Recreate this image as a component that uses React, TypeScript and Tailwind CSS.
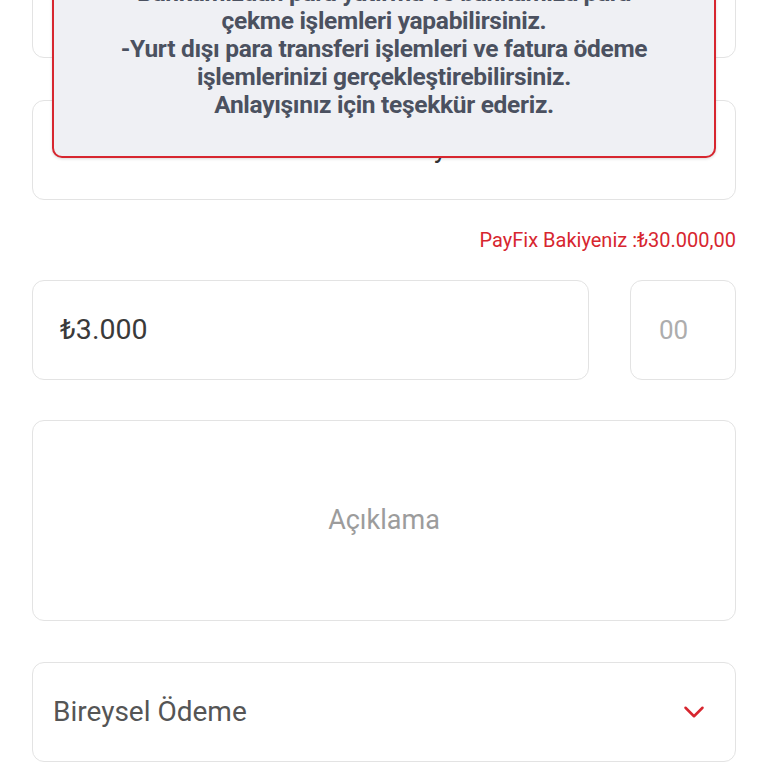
import { ChevronDown } from 'lucide-react';

const font = { fontFamily: 'Roboto, "Noto Sans", sans-serif' };

export default function App() {
  return (
    <div className="relative h-[768px] w-[768px] overflow-hidden bg-white" style={font}>
      <div className="flex flex-col px-8">
        {/* Previous field, mostly scrolled off */}
        <div className="-mt-[42px] h-[100px] rounded-xl border border-[#e3e3e3] bg-white" />

        {/* Recipient name */}
        <div className="mt-[42px] flex h-[100px] items-center justify-center rounded-xl border border-[#e3e3e3] bg-white pb-[4px] text-[27px] text-[#333]">
          Havvan Kaya
        </div>

        <div className="mt-[26px] flex justify-end text-[20px] leading-[28px] text-[#d7262f]">
          PayFix Bakiyeniz :₺30.000,00
        </div>

        {/* Amount row */}
        <div className="mt-[26px] flex gap-[41px]">
          <div className="flex h-[100px] flex-1 items-center rounded-xl border border-[#e3e3e3] pl-[27px] text-[28.5px] text-[#3a3a3a]">
            ₺3.000
          </div>
          <div className="flex h-[100px] w-[106px] items-center rounded-xl border border-[#e3e3e3] pl-[28px] text-[26px] text-[#adadad]">
            00
          </div>
        </div>

        {/* Description */}
        <div className="mt-[40px] flex h-[201px] items-center justify-center rounded-xl border border-[#e3e3e3] text-[27px] text-[#9c9c9c]">
          Açıklama
        </div>

        {/* Payment type */}
        <div className="mt-[41px] flex h-[100px] items-center justify-between rounded-xl border border-[#e3e3e3] pl-[20px] pr-[24px] text-[28px] text-[#555]">
          <span>Bireysel Ödeme</span>
          <ChevronDown className="h-[34px] w-[34px] text-[#d7262f]" strokeWidth={1.8} />
        </div>
      </div>

      {/* Info popup over the form */}
      <div className="absolute -top-[80px] left-[52px] right-[52px] flex h-[238px] flex-col justify-end rounded-[10px] border-2 border-[#d7262f] bg-[#eff0f4] pb-[37px] text-center text-[24.5px] font-bold leading-[28px] tracking-[-0.3px] text-[#4b5160] shadow-[0_1px_3px_rgba(0,0,0,0.15)]">
        <p>-PayFix hesabınız ile</p>
        <p>Bankamızdan para yatırma ve bankamıza para</p>
        <p>çekme işlemleri yapabilirsiniz.</p>
        <p>-Yurt dışı para transferi işlemleri ve fatura ödeme</p>
        <p>işlemlerinizi gerçekleştirebilirsiniz.</p>
        <p>Anlayışınız için teşekkür ederiz.</p>
      </div>
    </div>
  );
}
